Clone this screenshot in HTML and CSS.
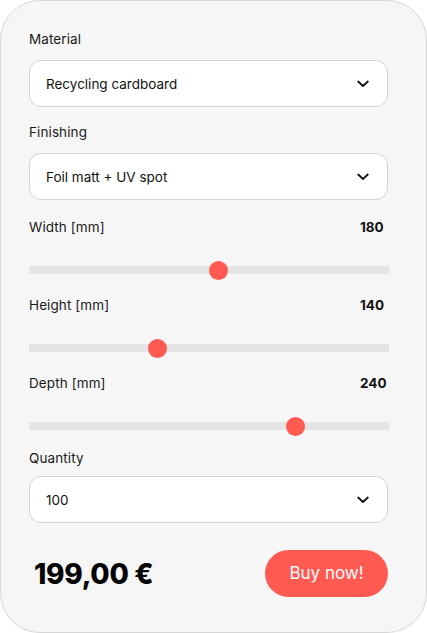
FILE: index.html
```html
<!DOCTYPE html>
<html lang="en">
<head>
<meta charset="utf-8">
<title>Box configurator</title>
<link rel="stylesheet" href="styles.css">
</head>
<body>
<div class="card">
  <div class="field">
    <div class="label">Material</div>
    <div class="select">
      <span>Recycling cardboard</span>
      <svg class="chev" width="12" height="8" viewBox="0 0 12 8"><path d="M1.2 1.5 L6 6 L10.8 1.5" fill="none" stroke="#111" stroke-width="1.8" stroke-linecap="round" stroke-linejoin="round"/></svg>
    </div>
  </div>
  <div class="field">
    <div class="label">Finishing</div>
    <div class="select">
      <span>Foil matt + UV spot</span>
      <svg class="chev" width="12" height="8" viewBox="0 0 12 8"><path d="M1.2 1.5 L6 6 L10.8 1.5" fill="none" stroke="#111" stroke-width="1.8" stroke-linecap="round" stroke-linejoin="round"/></svg>
    </div>
  </div>
  <div class="range">
    <div class="range-head"><span class="label">Width [mm]</span><span class="value">180</span></div>
    <div class="slider"><div class="track"></div><div class="thumb" style="left:52.5%"></div></div>
  </div>
  <div class="range">
    <div class="range-head"><span class="label">Height [mm]</span><span class="value">140</span></div>
    <div class="slider"><div class="track"></div><div class="thumb" style="left:35.6%"></div></div>
  </div>
  <div class="range">
    <div class="range-head"><span class="label">Depth [mm]</span><span class="value">240</span></div>
    <div class="slider"><div class="track"></div><div class="thumb" style="left:73.9%"></div></div>
  </div>
  <div class="field qty">
    <div class="label">Quantity</div>
    <div class="select">
      <span>100</span>
      <svg class="chev" width="12" height="8" viewBox="0 0 12 8"><path d="M1.2 1.5 L6 6 L10.8 1.5" fill="none" stroke="#111" stroke-width="1.8" stroke-linecap="round" stroke-linejoin="round"/></svg>
    </div>
  </div>
  <div class="footer">
    <div class="price">199,00 €</div>
    <button class="buy">Buy now!</button>
  </div>
</div>
</body>
</html>
```

FILE: styles.css
```css
* { box-sizing: border-box; }
html, body { margin: 0; padding: 0; background: #ffffff; }
body { font-family: "Inter", "Noto Sans", sans-serif; color: #111; }

.card {
  width: 427px;
  height: 633px;
  background: #f6f6f6;
  border: 1px solid #d6d6d6;
  border-radius: 40px;
  padding: 28px 38px 0 28px;
  display: flex;
  flex-direction: column;
}

.label {
  font-size: 13.5px;
  line-height: 20px;
  color: #1a1a1a;
  letter-spacing: 0.1px;
}

.field { display: flex; flex-direction: column; gap: 11px; }
.field + .field { margin-top: 15px; }

.select {
  height: 47px;
  background: #fff;
  border: 1px solid #d4d4d4;
  border-radius: 12px;
  padding: 0 18px 0 16px;
  display: flex;
  align-items: center;
  justify-content: space-between;
  font-size: 13.5px;
  color: #111;
}
.chev { display: block; }

.range { margin-top: 15px; }
.field + .range { margin-top: 17px; }
.range-head { display: flex; justify-content: space-between; align-items: center; }
.value {
  width: 28px;
  font-size: 13.5px;
  font-weight: 700;
  line-height: 20px;
}
.slider {
  position: relative;
  height: 20px;
  margin-top: 23px;
  margin-right: -1px;
}
.track {
  position: absolute;
  left: 0; right: 0; top: 6px;
  height: 8px;
  background: #e4e4e4;
}
.thumb {
  position: absolute;
  top: 0.5px;
  width: 19px;
  height: 19px;
  margin-left: -9.5px;
  border-radius: 50%;
  background: #ff5a52;
}

.range + .qty { margin-top: 12px; }
.qty { gap: 8px; }

.footer {
  margin-top: 27px;
  display: flex;
  align-items: center;
  justify-content: space-between;
}
.price {
  margin-left: 5px;
  font-size: 28px;
  font-weight: 800;
  color: #050505;
  letter-spacing: -0.3px;
}
.buy {
  width: 123px;
  height: 47px;
  border: none;
  border-radius: 24px;
  background: #ff5a52;
  color: #fff;
  font-family: "Inter", "Noto Sans", sans-serif;
  font-size: 17px;
  padding: 0 0 2px;
}
```
